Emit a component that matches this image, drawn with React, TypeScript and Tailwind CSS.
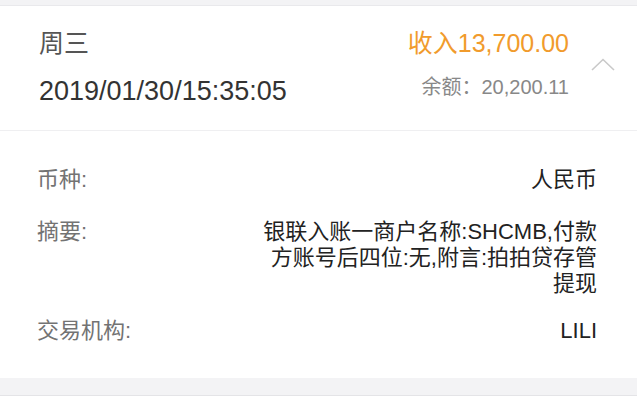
const font = "font-['Liberation_Sans','Noto_Sans_CJK_SC',sans-serif]";

function DetailRow({ label, value }: { label: string; value: string }) {
  return (
    <div className="flex items-start justify-between">
      <span className="text-[22px] leading-[26px] text-[#737373]">{label}</span>
      <span className="max-w-[341px] text-right text-[22px] leading-[26px] text-[#222]">{value}</span>
    </div>
  );
}

export default function App() {
  return (
    <div className={`${font} min-h-[414px] w-[637px] bg-white`}>
      <div className="h-[6px] border-b border-[#e9e9ec] bg-[#f3f3f5]" />

      <div className="flex h-[125px] items-start border-b border-[#efeff1] bg-white pl-[39px] pr-[22px] pt-[22px]">
        <div className="flex flex-1 flex-col">
          <span className="text-[25px] leading-[30px] text-[#555]">周三</span>
          <span className="mt-[17px] text-[27px] leading-[32px] text-[#333]">2019/01/30/15:35:05</span>
        </div>
        <div className="flex flex-col items-end">
          <span className="text-[25px] leading-[30px] text-[#f19b2c]">收入13,700.00</span>
          <span className="mt-[16px] text-[20px] leading-[26px] text-[#888]">余额：20,200.11</span>
        </div>
        <div className="ml-[22px] pt-[30px]">
          <svg width="24" height="13" viewBox="0 0 24 13" fill="none">
            <path d="M1 12L12 1.5L23 12" stroke="#c9c9c9" strokeWidth="1.6" />
          </svg>
        </div>
      </div>

      <div className="flex flex-col bg-white pb-[34px] pl-[37px] pr-[40px] pt-[36px]">
        <DetailRow label="币种:" value="人民币" />
        <div className="mt-[26px]">
          <DetailRow label="摘要:" value="银联入账一商户名称:SHCMB,付款方账号后四位:无,附言:拍拍贷存管提现" />
        </div>
        <div className="mt-[21px]">
          <DetailRow label="交易机构:" value="LILI" />
        </div>
      </div>

      <div className="h-[18px] border-b border-[#e4e4e7] bg-[#f3f3f5]" />
    </div>
  );
}
